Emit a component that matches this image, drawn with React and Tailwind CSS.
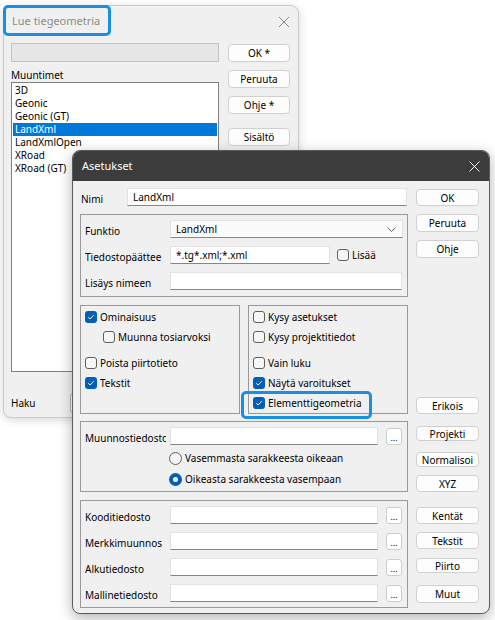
import React from "react";

const Btn = ({ children, className = "" }) => (
  <div className={`flex items-center justify-center rounded-[4px] border border-[#d0d0d0] bg-[#fdfdfd] leading-none ${className}`}>
    {children}
  </div>
);

const Check = ({ checked }) =>
  checked ? (
    <span className="flex h-[12px] w-[12px] shrink-0 items-center justify-center rounded-[3px] bg-[#005fb8]">
      <svg width="12" height="12" viewBox="0 0 12 12">
        <path d="M3.3 6.2 5.1 8 8.7 4.2" fill="none" stroke="#fff" strokeWidth="1" />
      </svg>
    </span>
  ) : (
    <span className="h-[12px] w-[12px] shrink-0 rounded-[3px] border border-[#5e5e5e] bg-[#f6f6f6]" />
  );

const Radio = ({ checked }) =>
  checked ? (
    <span className="flex h-[13px] w-[13px] shrink-0 items-center justify-center rounded-full bg-[#005fb8]">
      <span className="h-[5px] w-[5px] rounded-full bg-white" />
    </span>
  ) : (
    <span className="h-[13px] w-[13px] shrink-0 rounded-full border border-[#5e5e5e] bg-[#f6f6f6]" />
  );

const Field = ({ className = "", children }) => (
  <div className={`h-[18px] border border-[#e2e2e2] border-b-[#868686] bg-white pl-[5px] leading-[16px] ${className}`}>
    {children}
  </div>
);

const Dots = () => (
  <div className="flex h-[17px] w-[16px] items-end justify-center rounded-[3px] border border-[#cdcdcd] bg-white pb-[2px] text-[9px] leading-none">
    ...
  </div>
);

const CheckRow = ({ checked, label, className = "" }) => (
  <div className={`flex h-[20px] items-center gap-[3px] ${className}`}>
    <Check checked={checked} />
    <span>{label}</span>
  </div>
);

const FileRow = ({ label, className = "" }) => (
  <div className={`flex items-end ${className}`}>
    <span className="w-[89px] pl-[4px] leading-[14px]">{label}</span>
    <Field className="w-[208px]" />
    <div className="ml-[8px]">
      <Dots />
    </div>
  </div>
);

const converters = ["3D", "Geonic", "Geonic (GT)", "LandXml", "LandXmlOpen", "XRoad", "XRoad (GT)"];

export default function App() {
  return (
    <div className="relative h-[620px] w-[495px] overflow-hidden bg-white font-['Noto_Sans',sans-serif] text-[10px] text-black">
      {/* Lue tiegeometria */}
      <div className="absolute left-[3px] top-[5px] flex h-[413px] w-[296px] flex-col rounded-[8px] border border-[#cacaca] bg-[#f0f0f0] shadow-[0_2px_10px_rgba(0,0,0,0.16)]">
        <div className="flex h-[31px] items-center justify-between pl-[8px] pr-[8px]">
          <span className="text-[11px] text-[#8c8c8c]">Lue tiegeometria</span>
          <svg width="12" height="12" viewBox="0 0 12 12">
            <path d="M1 1 11 11M11 1 1 11" stroke="#8a8a8a" strokeWidth="1" />
          </svg>
        </div>
        <div className="flex gap-[9px] pl-[7px]">
          <div className="flex w-[208px] flex-col">
            <div className="mt-[6px] h-[19px] border border-[#c4c4c4] bg-[#e6e6e6]" />
            <div className="mt-[6px] h-[14px] leading-[14px]">Muuntimet</div>
            <div className="h-[290px] border border-[#7f7f7f] bg-white pt-[1px] pl-px pr-px">
              {converters.map((c) => (
                <div
                  key={c}
                  className={`h-[13px] pl-[2px] leading-[13px] ${c === "LandXml" ? "bg-[#0078d7] text-white" : ""}`}
                >
                  {c}
                </div>
              ))}
            </div>
            <div className="mt-[21px] flex h-[20px] items-center">
              <span className="w-[59px]">Haku</span>
              <div className="h-[20px] w-[140px] rounded-[3px] border border-[#b5b5b5] bg-white" />
            </div>
          </div>
          <div className="flex w-[62px] flex-col">
            <Btn className="mt-[7px] h-[18px]">OK *</Btn>
            <Btn className="mt-[8px] h-[18px]">Peruuta</Btn>
            <Btn className="mt-[8px] h-[18px]">Ohje *</Btn>
            <Btn className="mt-[14px] h-[18px]">Sisältö</Btn>
          </div>
        </div>
      </div>

      {/* Asetukset */}
      <div className="absolute left-[72px] top-[150px] flex h-[464px] w-[418px] flex-col overflow-hidden rounded-[8px] border border-[#5c5c5c] bg-[#f0f0f0] shadow-[0_4px_14px_rgba(0,0,0,0.3)]">
        <div className="flex h-[30px] shrink-0 items-center justify-between bg-[#3c3c3c] pl-[9px] pr-[9px] text-[11px] text-white">
          <span>Asetukset</span>
          <svg width="11" height="11" viewBox="0 0 11 11">
            <path d="M0.5 0.5 10.5 10.5M10.5 0.5 0.5 10.5" stroke="#fff" strokeWidth="1" />
          </svg>
        </div>
        <div className="flex gap-[8px] px-[7px]">
          <div className="flex w-[328px] flex-col pt-[7px]">
            <div className="flex items-end">
              <span className="w-[47px] pl-px leading-[14px]">Nimi</span>
              <Field className="w-[280px]">LandXml</Field>
            </div>

            <div className="mt-[8px] flex h-[83px] flex-col border border-[#999] pt-[5px]">
              <div className="flex items-end">
                <span className="w-[89px] pl-[4px] leading-[14px]">Funktio</span>
                <div className="flex h-[18px] w-[233px] items-center justify-between border border-[#e2e2e2] border-b-[#868686] bg-[#fbfbfb] pl-[5px] pr-[6px]">
                  <span>LandXml</span>
                  <svg width="9" height="5" viewBox="0 0 9 5">
                    <path d="M0.5 0.5 4.5 4.5 8.5 0.5" fill="none" stroke="#666" strokeWidth="1" />
                  </svg>
                </div>
              </div>
              <div className="mt-[8px] flex items-end">
                <span className="w-[89px] pl-[4px] leading-[14px]">Tiedostopäättee</span>
                <Field className="w-[160px]">*.tg*.xml;*.xml</Field>
                <div className="ml-[7px] flex h-[18px] items-center gap-[3px]">
                  <Check />
                  <span>Lisää</span>
                </div>
              </div>
              <div className="mt-[8px] flex items-end">
                <span className="w-[89px] pl-[4px] leading-[14px]">Lisäys nimeen</span>
                <Field className="w-[232px]" />
              </div>
            </div>

            <div className="mt-[8px] flex h-[109px] gap-[8px]">
              <div className="flex w-[160px] flex-col border border-[#999] pl-[4px] pt-[1px]">
                <CheckRow checked label="Ominaisuus" />
                <CheckRow label="Muunna tosiarvoksi" className="pl-[18px]" />
                <CheckRow label="Poista piirtotieto" className="mt-[6px]" />
                <CheckRow checked label="Tekstit" />
              </div>
              <div className="flex w-[160px] flex-col border border-[#999] pl-[4px] pt-[1px]">
                <CheckRow label="Kysy asetukset" />
                <CheckRow label="Kysy projektitiedot" />
                <CheckRow label="Vain luku" className="mt-[6px]" />
                <CheckRow checked label="Näytä varoitukset" />
                <CheckRow checked label="Elementtigeometria" />
              </div>
            </div>

            <div className="mt-[7px] flex h-[71px] flex-col border border-[#999] pt-[5px]">
              <div className="flex items-end">
                <span className="mr-[4px] w-[85px] overflow-hidden whitespace-nowrap pl-[4px] leading-[14px]">
                  Muunnostiedosto
                </span>
                <Field className="w-[208px]" />
                <div className="ml-[8px]">
                  <Dots />
                </div>
              </div>
              <div className="mt-[3px] flex h-[21px] items-center gap-[3px] pl-[88px]">
                <Radio />
                <span>Vasemmasta sarakkeesta oikeaan</span>
              </div>
              <div className="flex h-[21px] items-center gap-[3px] pl-[88px]">
                <Radio checked />
                <span>Oikeasta sarakkeesta vasempaan</span>
              </div>
            </div>

            <div className="mt-[8px] flex h-[108px] flex-col gap-[8px] border border-[#999] pt-[5px]">
              <FileRow label="Kooditiedosto" />
              <FileRow label="Merkkimuunnos" />
              <FileRow label="Alkutiedosto" />
              <FileRow label="Mallinetiedosto" />
            </div>
          </div>

          <div className="flex w-[63px] flex-col">
            <Btn className="mt-[8px] h-[17px]">OK</Btn>
            <Btn className="mt-[8px] h-[18px]">Peruuta</Btn>
            <Btn className="mt-[8px] h-[18px] border-[#2e4660]">Ohje</Btn>
            <Btn className="mt-[139px] h-[17px]">Erikois</Btn>
            <Btn className="mt-[12px] h-[15px]">Projekti</Btn>
            <Btn className="mt-[11px] h-[15px]">Normalisoi</Btn>
            <Btn className="mt-[8px] h-[17px]">XYZ</Btn>
            <Btn className="mt-[15px] h-[17px]">Kentät</Btn>
            <Btn className="mt-[8px] h-[17px]">Tekstit</Btn>
            <Btn className="mt-[9px] h-[15px]">Piirto</Btn>
            <Btn className="mt-[12px] h-[18px]">Muut</Btn>
          </div>
        </div>
      </div>

      {/* focus outlines */}
      <div className="pointer-events-none absolute left-[3px] top-[5px] h-[31px] w-[108px] rounded-[5px] border-[3px] border-[#1a8de4]" />
      <div className="pointer-events-none absolute left-[241px] top-[391px] h-[28px] w-[131px] rounded-[5px] border-[3px] border-[#1a8de4]" />
    </div>
  );
}
